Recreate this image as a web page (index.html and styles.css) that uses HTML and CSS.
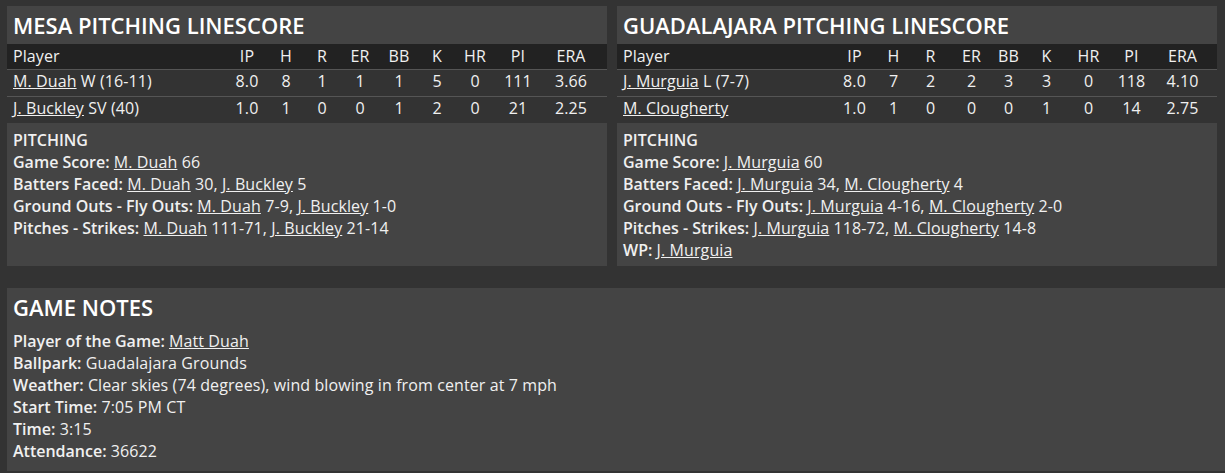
FILE: index.html
```html
<!DOCTYPE html>
<html>
<head>
<meta charset="utf-8">
<link rel="stylesheet" href="styles.css">
</head>
<body>
<div class="top-grid">
  <section class="panel">
    <h2 class="panel-title">MESA PITCHING LINESCORE</h2>
    <table class="linescore linescore-away">
      <colgroup>
        <col><col class="c-ip"><col class="c-h"><col class="c-r"><col class="c-er"><col class="c-bb"><col class="c-k"><col class="c-hr"><col class="c-pi"><col class="c-era">
      </colgroup>
      <thead>
        <tr><th class="name">Player</th><th>IP</th><th>H</th><th>R</th><th>ER</th><th>BB</th><th>K</th><th>HR</th><th>PI</th><th>ERA</th></tr>
      </thead>
      <tbody>
        <tr><td class="name"><a href="#">M. Duah</a> W (16-11)</td><td>8.0</td><td>8</td><td>1</td><td>1</td><td>1</td><td>5</td><td>0</td><td>111</td><td>3.66</td></tr>
        <tr><td class="name"><a href="#">J. Buckley</a> SV (40)</td><td>1.0</td><td>1</td><td>0</td><td>0</td><td>1</td><td>2</td><td>0</td><td>21</td><td>2.25</td></tr>
      </tbody>
    </table>
    <div class="notes">
      <div class="line"><b>PITCHING</b></div>
      <div class="line"><b>Game Score:</b> <a href="#">M. Duah</a> 66</div>
      <div class="line"><b>Batters Faced:</b> <a href="#">M. Duah</a> 30, <a href="#">J. Buckley</a> 5</div>
      <div class="line"><b>Ground Outs - Fly Outs:</b> <a href="#">M. Duah</a> 7-9, <a href="#">J. Buckley</a> 1-0</div>
      <div class="line"><b>Pitches - Strikes:</b> <a href="#">M. Duah</a> 111-71, <a href="#">J. Buckley</a> 21-14</div>
    </div>
  </section>
  <section class="panel">
    <h2 class="panel-title">GUADALAJARA PITCHING LINESCORE</h2>
    <table class="linescore linescore-home">
      <colgroup>
        <col><col class="c-ip"><col class="c-h"><col class="c-r"><col class="c-er"><col class="c-bb"><col class="c-k"><col class="c-hr"><col class="c-pi"><col class="c-era">
      </colgroup>
      <thead>
        <tr><th class="name">Player</th><th>IP</th><th>H</th><th>R</th><th>ER</th><th>BB</th><th>K</th><th>HR</th><th>PI</th><th>ERA</th></tr>
      </thead>
      <tbody>
        <tr><td class="name"><a href="#">J. Murguia</a> L (7-7)</td><td>8.0</td><td>7</td><td>2</td><td>2</td><td>3</td><td>3</td><td>0</td><td>118</td><td>4.10</td></tr>
        <tr><td class="name"><a href="#">M. Clougherty</a></td><td>1.0</td><td>1</td><td>0</td><td>0</td><td>0</td><td>1</td><td>0</td><td>14</td><td>2.75</td></tr>
      </tbody>
    </table>
    <div class="notes">
      <div class="line"><b>PITCHING</b></div>
      <div class="line"><b>Game Score:</b> <a href="#">J. Murguia</a> 60</div>
      <div class="line"><b>Batters Faced:</b> <a href="#">J. Murguia</a> 34, <a href="#">M. Clougherty</a> 4</div>
      <div class="line"><b>Ground Outs - Fly Outs:</b> <a href="#">J. Murguia</a> 4-16, <a href="#">M. Clougherty</a> 2-0</div>
      <div class="line"><b>Pitches - Strikes:</b> <a href="#">J. Murguia</a> 118-72, <a href="#">M. Clougherty</a> 14-8</div>
      <div class="line"><b>WP:</b> <a href="#">J. Murguia</a></div>
    </div>
  </section>
</div>
<section class="panel game-notes">
  <h2 class="panel-title">GAME NOTES</h2>
  <div class="notes-body">
    <div class="line"><b>Player of the Game:</b> <a href="#">Matt Duah</a></div>
    <div class="line"><b>Ballpark:</b> Guadalajara Grounds</div>
    <div class="line"><b>Weather:</b> Clear skies (74 degrees), wind blowing in from center at 7 mph</div>
    <div class="line"><b>Start Time:</b> 7:05 PM CT</div>
    <div class="line"><b>Time:</b> 3:15</div>
    <div class="line"><b>Attendance:</b> 36622</div>
  </div>
</section>
</body>
</html>
```
FILE: styles.css
```css
html, body {
  margin: 0;
  padding: 0;
}
body {
  background: #333333;
  color: #f0f0f0;
  font-family: "Open Sans", "Liberation Sans", sans-serif;
  font-size: 16px;
  line-height: 22px;
  letter-spacing: 0.1px;
  padding: 6px 0 6px 7px;
  overflow: hidden;
}
a {
  color: #f0f0f0;
  text-decoration: underline;
}
b {
  font-weight: 600;
  letter-spacing: 0;
}
.top-grid {
  display: grid;
  grid-template-columns: 600px 600px;
  column-gap: 10px;
}
.panel {
  background: #444444;
  display: flex;
  flex-direction: column;
}
.panel-title {
  margin: 0;
  padding: 5px 6px 4px;
  font-size: 22px;
  line-height: 29px;
  font-weight: 600;
  letter-spacing: 0;
  color: #ffffff;
}
.linescore {
  width: 100%;
  border-collapse: collapse;
  table-layout: fixed;
}
.linescore-away col.c-ip { width: 56px; }
.linescore-away col.c-h { width: 22px; }
.linescore-away col.c-r { width: 50px; }
.linescore-away col.c-er { width: 26px; }
.linescore-away col.c-bb { width: 52px; }
.linescore-away col.c-k { width: 24px; }
.linescore-away col.c-hr { width: 52px; }
.linescore-away col.c-pi { width: 34px; }
.linescore-away col.c-era { width: 72px; }
.linescore-home col.c-ip { width: 57px; }
.linescore-home col.c-h { width: 21px; }
.linescore-home col.c-r { width: 53px; }
.linescore-home col.c-er { width: 29px; }
.linescore-home col.c-bb { width: 45px; }
.linescore-home col.c-k { width: 31px; }
.linescore-home col.c-hr { width: 53px; }
.linescore-home col.c-pi { width: 33px; }
.linescore-home col.c-era { width: 69px; }
.linescore th {
  background: #222222;
  font-weight: 400;
  text-align: center;
  padding: 1px 0 2px;
  line-height: 22px;
  white-space: nowrap;
}
.linescore td {
  background: #333333;
  border-top: 1px solid #555555;
  text-align: center;
  padding: 0 0 4px;
  line-height: 22px;
  white-space: nowrap;
}
.linescore th.name,
.linescore td.name {
  text-align: left;
  padding-left: 6px;
}
.notes {
  flex: 1;
  padding: 6px 6px 5px;
}
.game-notes {
  margin-top: 22px;
}
.notes-body {
  padding: 4px 6px 9px;
}
```
